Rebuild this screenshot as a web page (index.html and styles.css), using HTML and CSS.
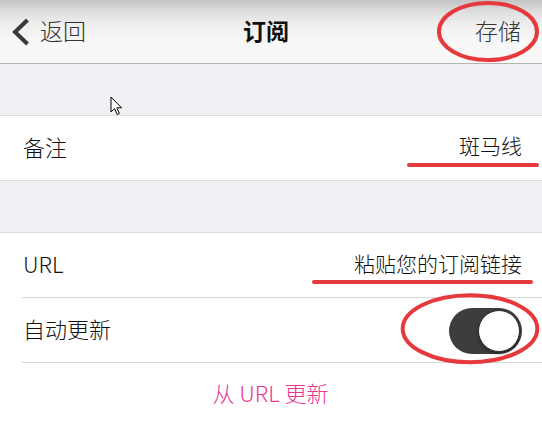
FILE: index.html
```html
<!DOCTYPE html>
<html lang="zh-CN">
<head>
<meta charset="utf-8">
<title>订阅</title>
<link rel="stylesheet" href="styles.css">
</head>
<body>
<div class="screen">
  <header class="nav">
    <a class="back">
      <svg class="chev" width="18" height="28" viewBox="0 0 18 28"><polyline points="15.5,2 3,14 15.5,26" fill="none" stroke="#3a3a3a" stroke-width="4" stroke-linejoin="miter"/></svg>
      <span>返回</span>
    </a>
    <h1 class="title">订阅</h1>
    <span class="save">存储</span>
  </header>

  <div class="gap"></div>

  <section class="group">
    <div class="row">
      <span class="label">备注</span>
      <span class="value">斑马线</span>
    </div>
  </section>

  <div class="gap"></div>

  <section class="group group-last">
    <div class="row sep">
      <span class="label">URL</span>
      <span class="value">粘贴您的订阅链接</span>
    </div>
    <div class="row sep">
      <span class="label">自动更新</span>
      <span class="toggle on"><span class="knob"></span></span>
    </div>
    <div class="row action">
      <span class="action-text">从 URL 更新</span>
    </div>
  </section>

  <svg class="marks" width="542" height="424" viewBox="0 0 542 424">
    <ellipse cx="488" cy="31.5" rx="49" ry="28.5" fill="none" stroke="#e6393d" stroke-width="4"/>
    <line x1="409" y1="165" x2="537" y2="165" stroke="#e6393d" stroke-width="4" stroke-linecap="round"/>
    <line x1="314" y1="282" x2="531" y2="282" stroke="#e6393d" stroke-width="4" stroke-linecap="round"/>
    <ellipse cx="470" cy="328.7" rx="67.3" ry="33.5" fill="none" stroke="#e6393d" stroke-width="4"/>
  </svg>

  <svg class="cursor" width="14" height="20" viewBox="0 0 14 20">
    <path d="M1 1 L1 16 L4.5 12.6 L7.2 18.5 L9.4 17.5 L6.8 11.8 L11.5 11.8 Z" fill="#fff" stroke="#000" stroke-width="1" stroke-linejoin="round"/>
  </svg>
</div>
</body>
</html>
```

FILE: styles.css
```css
* {
  box-sizing: border-box;
}

html, body {
  margin: 0;
  padding: 0;
  background: #ffffff;
}

body {
  font-family: "Noto Sans CJK SC", "Noto Sans", sans-serif;
  font-weight: 300;
  color: #111;
}

.screen {
  position: relative;
  width: 542px;
  height: 424px;
  overflow: hidden;
  background: #efeff4;
  display: flex;
  flex-direction: column;
}

.nav {
  height: 64px;
  flex: 0 0 64px;
  display: grid;
  grid-template-columns: 1fr auto 1fr;
  align-items: center;
  padding: 0 22px 0 12px;
  background: linear-gradient(#c3c3c3 0%, #dedede 18%, #efefef 40%, #f7f7f7 65%, #f8f8f8 100%);
  border-bottom: 1px solid #b4b4b4;
}

.back {
  display: flex;
  align-items: center;
  gap: 10px;
  font-size: 23px;
  color: #333;
  line-height: 1;
  margin-top: -2px;
}

.chev {
  display: block;
  margin-top: 2px;
}

.title {
  margin: 0;
  font-size: 23px;
  font-weight: 700;
  color: #111;
  line-height: 1;
  margin-top: -2px;
}

.save {
  justify-self: end;
  font-size: 23px;
  color: #333;
  line-height: 1;
  margin-top: -2px;
  margin-right: -1px;
}

.gap {
  height: 51px;
  flex: 0 0 51px;
}

.group {
  background: #fff;
  border-top: 1px solid #dcdce0;
  border-bottom: 1px solid #dcdce0;
}

.group-last {
  flex: 1 1 auto;
  border-bottom: none;
}

.row {
  height: 64px;
  display: flex;
  align-items: center;
  justify-content: space-between;
  padding: 0 22px 5px 23px;
}

.row.sep {
  height: 65px;
  position: relative;
}

.row.sep::after {
  content: "";
  position: absolute;
  left: 22px;
  right: 0;
  bottom: 0;
  height: 1px;
  background: #d8d8dc;
}

.label {
  font-size: 22px;
  line-height: 1;
  color: #111;
}

.value {
  font-size: 21px;
  line-height: 1;
  color: #111;
  margin-right: -2px;
}

.toggle {
  width: 73px;
  height: 46px;
  border-radius: 23px;
  background: #3d3d3d;
  display: flex;
  align-items: center;
  justify-content: flex-end;
  padding: 2px;
  margin-right: -2px;
  margin-bottom: -5px;
}

.knob {
  width: 42px;
  height: 42px;
  border-radius: 50%;
  background: #fff;
  border: 1px solid #2a2a2a;
  box-shadow: 0 2px 3px rgba(0, 0, 0, 0.35);
}

.row.action {
  justify-content: center;
  height: 62px;
  padding-bottom: 4px;
}

.action-text {
  font-size: 22px;
  line-height: 1;
  color: #ea3590;
  margin-right: 2px;
}

.marks {
  position: absolute;
  left: 0;
  top: 0;
  pointer-events: none;
}

.cursor {
  position: absolute;
  left: 110px;
  top: 96px;
  pointer-events: none;
}
```
